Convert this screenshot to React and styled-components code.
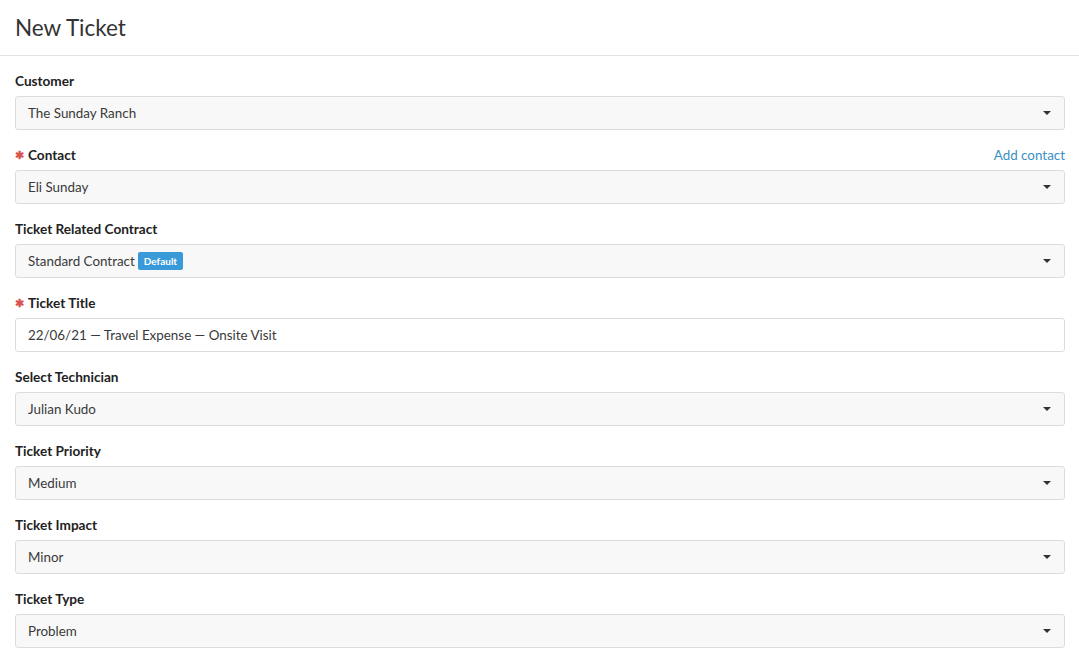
import React from 'react';
import styled, { createGlobalStyle } from 'styled-components';

const GlobalStyle = createGlobalStyle`
  body {
    margin: 0;
    background: #fff;
    font-family: 'Lato', 'Liberation Sans', sans-serif;
    color: #333;
  }
`;

const Header = styled.div`
  height: 56px;
  border-bottom: 1px solid #e3e3e3;
  display: flex;
  align-items: center;
  padding: 0 15px;
  box-sizing: border-box;
`;

const Title = styled.h1`
  margin: 0;
  font-size: 22.5px;
  font-weight: 400;
  color: #333;
`;

const Form = styled.div`
  padding: 16px 14px 0 15px;
  display: flex;
  flex-direction: column;
`;

const Field = styled.div`
  display: flex;
  flex-direction: column;
  margin-bottom: 16px;
`;

const LabelRow = styled.div`
  display: flex;
  justify-content: space-between;
  align-items: center;
  height: 18px;
  margin-bottom: 6px;
`;

const Label = styled.label`
  font-size: 13.6px;
  font-weight: 700;
  color: #222;
  display: flex;
  align-items: center;
`;

const Required = styled.span`
  color: #d9534f;
  font-size: 11px;
  margin-right: 4px;
`;

const Link = styled.a`
  font-size: 13.4px;
  color: #3a8fc4;
  text-decoration: none;
`;

const Box = styled.div`
  height: 34px;
  box-sizing: border-box;
  border: 1px solid #dcdcdc;
  border-radius: 3px;
  background: ${(p) => (p.plain ? '#fff' : '#f8f8f8')};
  display: flex;
  align-items: center;
  padding: 0 12px;
  font-size: 13.4px;
  color: #3a3a3a;
`;

const Value = styled.span`
  flex: 1;
  display: flex;
  align-items: center;
`;

const Badge = styled.span`
  background: #3a9ad9;
  color: #fff;
  font-size: 10px;
  font-weight: 700;
  padding: 3px 6px;
  border-radius: 2px;
  margin-left: 3px;
  line-height: 12px;
`;

const Caret = styled.span`
  width: 0;
  height: 0;
  border-left: 4px solid transparent;
  border-right: 4px solid transparent;
  border-top: 4px solid #333;
  margin-right: 1px;
`;

const fields = [
  { label: 'Customer', value: 'The Sunday Ranch' },
  { label: 'Contact', value: 'Eli Sunday', required: true, link: 'Add contact' },
  { label: 'Ticket Related Contract', value: 'Standard Contract', badge: 'Default' },
  { label: 'Ticket Title', value: '22/06/21 — Travel Expense — Onsite Visit', required: true, input: true },
  { label: 'Select Technician', value: 'Julian Kudo' },
  { label: 'Ticket Priority', value: 'Medium' },
  { label: 'Ticket Impact', value: 'Minor' },
  { label: 'Ticket Type', value: 'Problem' },
];

const App = () => (
  <>
    <GlobalStyle />
    <Header>
      <Title>New Ticket</Title>
    </Header>
    <Form>
      {fields.map((f) => (
        <Field key={f.label}>
          <LabelRow>
            <Label>
              {f.required && <Required>✱</Required>}
              {f.label}
            </Label>
            {f.link && <Link href="#">{f.link}</Link>}
          </LabelRow>
          <Box plain={f.input}>
            <Value>
              {f.value}
              {f.badge && <Badge>{f.badge}</Badge>}
            </Value>
            {!f.input && <Caret />}
          </Box>
        </Field>
      ))}
    </Form>
  </>
);

export default App;
